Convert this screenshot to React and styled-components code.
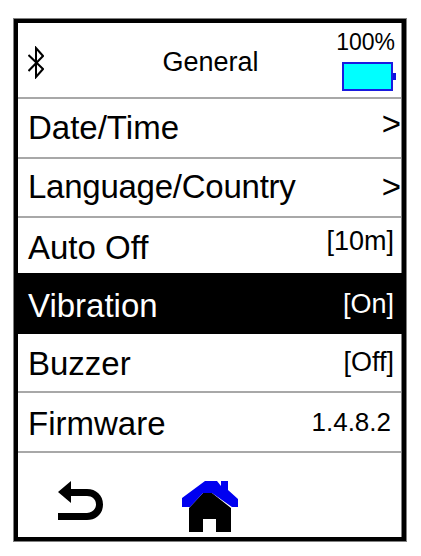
import React from 'react';
import styled, { createGlobalStyle } from 'styled-components';

const Global = createGlobalStyle`
  html, body { margin: 0; padding: 0; background: #fff; }
  body { font-family: "Liberation Sans", Arial, sans-serif; color: #000; }
`;

const Page = styled.div`
  width: 421px;
  height: 556px;
  padding: 18px 0 0 13px;
  box-sizing: border-box;
`;

const Device = styled.div`
  width: 394px;
  height: 524px;
  box-sizing: border-box;
  border: 1px solid #808080;
  display: flex;
`;

const Screen = styled.div`
  flex: 1;
  min-width: 0;
  border: 4px solid #000;
  display: flex;
  flex-direction: column;
  background: #fff;
`;

const Content = styled.div`
  flex: 1;
  min-width: 0;
  display: flex;
  flex-direction: column;
  border-right: 1px solid #808080;
`;

const Header = styled.header`
  height: 74px;
  flex: none;
  display: grid;
  grid-template-columns: 60px 1fr 60px;
  align-items: center;
  border-bottom: 2px solid #a8a8a8;
`;

const BluetoothSlot = styled.div`
  padding: 5px 0 0 10px;
  display: flex;
`;

const Title = styled.div`
  font-size: 27px;
  text-align: center;
  padding: 3px 0 0 2px;
  line-height: 30px;
`;

const Battery = styled.div`
  display: flex;
  flex-direction: column;
  align-items: flex-end;
  padding-right: 4px;
  gap: 7px;
`;

const Percent = styled.div`
  font-size: 23px;
  line-height: 26px;
  margin-right: 2px;
`;

const BatteryGlyph = styled.svg`
  display: block;
`;

const Row = styled.div`
  height: ${p => p.$h}px;
  flex: none;
  display: flex;
  align-items: center;
  justify-content: space-between;
  padding: 0 ${p => p.$pr ?? 7}px 0 10px;
  box-sizing: border-box;
  background: ${p => (p.$active ? '#000' : '#fff')};
  color: ${p => (p.$active ? '#fff' : '#000')};
  border-bottom: ${p => (p.$plain ? 'none' : '2px solid #a8a8a8')};
  margin-right: ${p => (p.$active ? '-1px' : '0')};
`;

const Label = styled.span`
  font-size: 33px;
  line-height: 38px;
  margin-top: ${p => p.$dy ?? 0}px;
  letter-spacing: ${p => p.$track ?? 0}px;
`;

const Value = styled.span`
  font-size: ${p => p.$size ?? 27}px;
  line-height: 30px;
  margin-bottom: ${p => p.$up ?? 6}px;
`;

const Chevron = styled.span`
  font-size: 33px;
  line-height: 38px;
  margin-right: -7px;
  margin-bottom: ${p => p.$up ?? 8}px;
`;

const Footer = styled.footer`
  flex: 1;
  display: flex;
  align-items: flex-start;
  padding: 28px 0 0 40px;
  gap: 79px;
`;

const BluetoothIcon = () => (
  <svg width="16" height="33" viewBox="0 0 16 33" fill="none" stroke="#000" strokeWidth="2">
    <path d="M0.5 9 L15 23 L8 31 V2 L15 10 L0.5 25" />
  </svg>
);

const BatteryIcon = () => (
  <BatteryGlyph width="55" height="29" viewBox="0 0 55 29">
    <rect x="1" y="1" width="49" height="27" fill="#00ffff" stroke="#1a1ae0" strokeWidth="2" />
    <rect x="51" y="11" width="3" height="7" fill="#1010e0" />
  </BatteryGlyph>
);

const BackIcon = () => (
  <svg width="45" height="39" viewBox="0 0 45 39">
    <path d="M0 11 L13 0 V8 H29 C38 8 45 14 45 23.5 C45 33 38 39 29 39 H0 V32 H29 C34 32 38 28 38 23.5 C38 18 34 15 29 15 H13 V22 Z" fill="#000" />
  </svg>
);

const HomeIcon = () => (
  <svg width="56" height="51" viewBox="0 0 56 51">
    <path d="M7 27 L21 12 H30 L49 27 V51 H34 V38 H21 V51 H7 Z" fill="#000" />
    <path d="M0 17 L23 0 H35 L39 5 V0 H46 V9 L56 18 V26 H50 L30 12 H21 L8 26 H0 Z" fill="#0000f0" />
  </svg>
);

export default function App() {
  return (
    <Page>
      <Global />
      <Device>
        <Screen>
          <Content>
            <Header>
              <BluetoothSlot><BluetoothIcon /></BluetoothSlot>
              <Title>General</Title>
              <Battery>
                <Percent>100%</Percent>
                <BatteryIcon />
              </Battery>
            </Header>
            <Row $h={60}><Label $dy={-1}>Date/Time</Label><Chevron>&gt;</Chevron></Row>
            <Row $h={59}><Label $dy={-2} $track={-0.25}>Language/Country</Label><Chevron $up={2}>&gt;</Chevron></Row>
            <Row $h={55} $plain><Label $dy={4}>Auto Off</Label><Value $up={10}>[10m]</Value></Row>
            <Row $h={61} $plain $active $pr={8}><Label $dy={4}>Vibration</Label><Value $up={0}>[On]</Value></Row>
            <Row $h={59}><Label $dy={2}>Buzzer</Label><Value $up={2}>[Off]</Value></Row>
            <Row $h={60} $pr={10}><Label $dy={3}>Firmware</Label><Value $size={26} $up={1}>1.4.8.2</Value></Row>
            <Footer>
              <BackIcon />
              <HomeIcon />
            </Footer>
          </Content>
        </Screen>
      </Device>
    </Page>
  );
}
